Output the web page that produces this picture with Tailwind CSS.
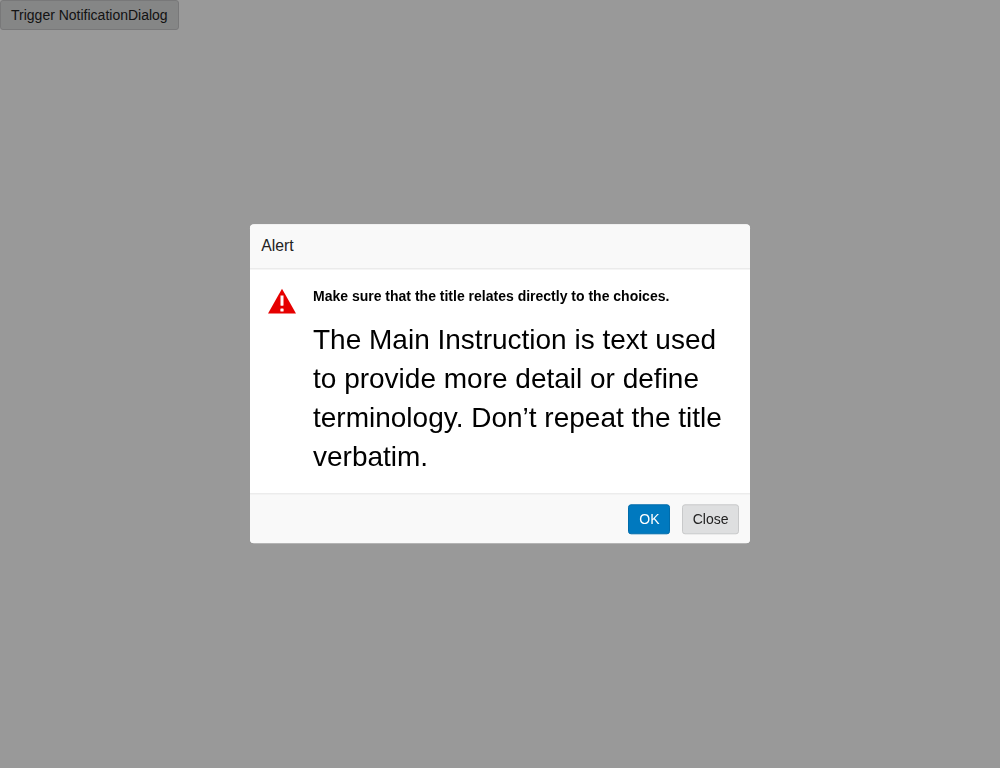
<!DOCTYPE html>
<html lang="en">
<head>
<meta charset="utf-8">
<title>Notification Dialog</title>
<script src="https://cdn.jsdelivr.net/npm/@tailwindcss/browser@4"></script>
</head>
<body class="h-screen overflow-hidden bg-white text-sm text-[#222] font-['Liberation_Sans',Arial,sans-serif]">
<button class="flex h-[30px] w-[179px] items-center rounded-[3px] border border-[#c8c9ca] bg-[#dedfe0] pl-[10px] text-[14px] whitespace-nowrap">Trigger NotificationDialog</button>
<div class="fixed inset-0 flex items-start justify-center bg-black/40 pt-[224px]">
  <div role="dialog" class="flex w-[500px] translate-y-[0.3px] flex-col overflow-hidden rounded-[4px] bg-white">
    <header class="flex h-[45px] items-center border-b border-[#e5e5e5] bg-[#f9f9f9] px-[11.3px] text-[15.75px] leading-6"><h1>Alert</h1></header>
    <div class="flex h-[224px] pl-[17px] pr-[20px] pt-[18px] text-black">
      <svg class="mr-4 mt-[2px] h-[26px] w-[30px] shrink-0 overflow-visible" viewBox="0 0 30 26"><path fill="#e60000" d="M15-.6 29 24.200H1Z"/><path fill="#fff" d="M13.500 6.200h3v9.800q0 .4-.4.4h-2.200q-.4 0-.4-.4z"/><rect x="13.400" y="19.200" width="3.200" height="3.100" rx=".6" fill="#fff"/></svg>
      <div>
        <h2 class="mb-[15px] text-[14px] leading-[18px] font-bold">Make sure that the title relates directly to the choices.</h2>
        <p class="text-[28px] leading-[39px]">The Main Instruction is text used to provide more detail or define terminology. Don’t repeat the title verbatim.</p>
      </div>
    </div>
    <footer class="flex h-[50px] items-start justify-end gap-3 border-t border-[#e5e5e5] bg-[#f9f9f9] px-[11px] pt-[10px]">
      <button class="h-[30px] w-[42px] rounded-[3px] border border-[#006cab] bg-[#0079bf] pl-[0.9px] text-white">OK</button>
      <button class="h-[30px] w-[57px] rounded-[3px] border border-[#c8c9ca] bg-[#dedfe0] pl-[0.3px]">Close</button>
    </footer>
  </div>
</div>
</body>
</html>
